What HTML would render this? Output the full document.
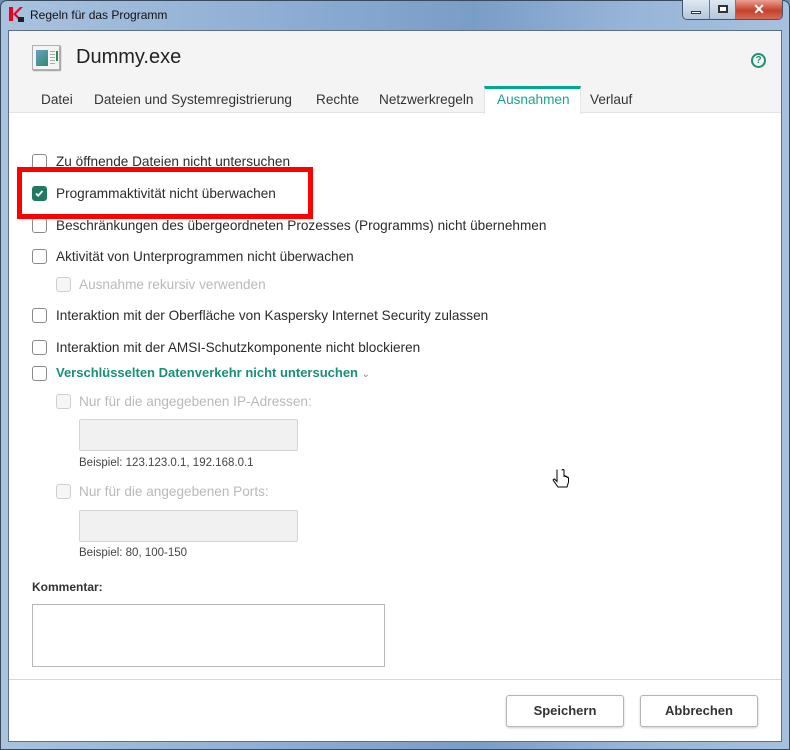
<!DOCTYPE html>
<html><head><meta charset="utf-8"><style>
*{margin:0;padding:0;box-sizing:border-box}
body{width:790px;height:750px;overflow:hidden;font-family:"Liberation Sans",sans-serif;background:#6f8fb5;position:relative}
.a{position:absolute;white-space:nowrap}
.frame{position:absolute;left:0;top:0;width:790px;height:750px;border:1px solid #3a4a5e;border-radius:7px 7px 0 0;background:linear-gradient(90deg,#a9c3df 0%,#8eaed3 35%,#7a9dc6 60%,#97b5d8 80%,#a6c1de 100%)}
.client{position:absolute;left:8px;top:30px;width:774px;height:712px;background:#fff;border:1px solid #5c6f86}
.cb{position:absolute;width:15px;height:15px;border:1.5px solid #8a8a8a;border-radius:3px;background:#fff}
.cb.d{border-color:#cfcfcf;background:#f6f6f6}
.lbl{position:absolute;font-size:13.6px;color:#2b2b2b;white-space:nowrap}
.lbl.d{color:#b9b9b9}
.tab{position:absolute;top:92px;font-size:13.6px;color:#333}
.inp{position:absolute;left:79px;width:219px;height:32px;background:#f1f1f1;border:1px solid #d4d4d4;border-radius:2px}
.ex{position:absolute;left:79px;font-size:11.5px;color:#444}
.btn{position:absolute;top:695px;width:118px;height:32px;border:1px solid #b5b5b5;border-radius:3px;background:#fff;box-shadow:0 1px 2px rgba(0,0,0,.2);font-size:13px;font-weight:bold;color:#333;text-align:center;line-height:30px}
</style></head><body>
<div class="frame"></div>
<div class="a" style="left:8px;top:5px;width:14px;height:18px"><svg width="16" height="18"><path d="M1 2h4v14H1z M5 9l7-7h3l-7 7 7 7h-3z" fill="#e8001c"/><rect x="10" y="12" width="6" height="5" fill="#222"/></svg></div>
<div class="a" style="left:30px;top:8px;font-size:12px;color:#111">Regeln für das Programm</div>
<div class="a" style="left:682px;top:0;width:101px;height:20px;border:1px solid #46566b;border-top:none;border-radius:0 0 5px 5px;overflow:hidden;display:flex">
 <div style="width:27px;background:linear-gradient(#dfe8f3,#b3c6dd);border-right:1px solid #6a7c92;position:relative"><div style="position:absolute;left:8px;top:11px;width:10px;height:3px;background:#fff;border:1px solid #333"></div></div>
 <div style="width:26px;background:linear-gradient(#dfe8f3,#b3c6dd);border-right:1px solid #6a7c92;position:relative"><div style="position:absolute;left:8px;top:5px;width:10px;height:8px;border:2px solid #333;background:#fff"></div></div>
 <div style="flex:1;background:linear-gradient(#e9a294,#c6402a 55%,#d56a55);color:#fff;font-weight:bold;font-size:14px;text-align:center;line-height:18px">✕</div>
</div>
<div class="client"></div>
<div class="a" style="left:9px;top:31px;width:772px;height:82px;background:#f4f4f4;border-bottom:1px solid #e4e4e4"></div>
<div class="a" style="left:32px;top:45px;width:28px;height:25px;border:1px solid #b0b0b0;background:#f4f4f4;box-shadow:1px 1px 1px #999">
 <div style="position:absolute;left:3px;top:4px;width:12px;height:16px;background:linear-gradient(135deg,#6aa0c9,#2f8a6a)"></div>
 <div style="position:absolute;left:17px;top:5px;width:5px;height:14px;background:repeating-linear-gradient(#aaa 0 1px,transparent 1px 3px)"></div>
 <div style="position:absolute;left:23px;top:5px;width:2px;height:10px;background:#2a8a55"></div>
</div>
<div class="a" style="left:76px;top:46px;font-size:20px;color:#222">Dummy.exe</div>
<div class="a" style="left:751px;top:53px;width:15px;height:15px;border:2px solid #1f8f70;border-radius:50%;color:#1f8f70;font-size:10px;font-weight:bold;text-align:center;line-height:11px">?</div>
<div class="a" style="left:484px;top:86px;width:97px;height:28px;background:#fff;border-top:3px solid #00a88e;border-left:1px solid #e4e4e4;border-right:1px solid #e4e4e4"></div>
<div class="tab" style="left:41px">Datei</div>
<div class="tab" style="left:94px">Dateien und Systemregistrierung</div>
<div class="tab" style="left:316px">Rechte</div>
<div class="tab" style="left:379px">Netzwerkregeln</div>
<div class="tab" style="left:497px;color:#1aa58e">Ausnahmen</div>
<div class="tab" style="left:590px">Verlauf</div>

<div class="cb" style="left:32px;top:154px"></div><div class="lbl" style="left:56px;top:154px">Zu öffnende Dateien nicht untersuchen</div>
<div class="cb" style="left:32px;top:186px;background:#1f7a63;border-color:#1f7a63"><svg width="12" height="12" style="position:absolute;left:0;top:0"><path d="M3 6.5l2.2 2.2L9.5 4" stroke="#fff" stroke-width="1.8" fill="none"/></svg></div><div class="lbl" style="left:56px;top:186px">Programmaktivität nicht überwachen</div>
<div class="cb" style="left:32px;top:218px"></div><div class="lbl" style="left:56px;top:218px">Beschränkungen des übergeordneten Prozesses (Programms) nicht übernehmen</div>
<div class="cb" style="left:32px;top:249px"></div><div class="lbl" style="left:56px;top:249px">Aktivität von Unterprogrammen nicht überwachen</div>
<div class="cb d" style="left:56px;top:277px"></div><div class="lbl d" style="left:79px;top:277px">Ausnahme rekursiv verwenden</div>
<div class="cb" style="left:32px;top:308px"></div><div class="lbl" style="left:56px;top:308px">Interaktion mit der Oberfläche von Kaspersky Internet Security zulassen</div>
<div class="cb" style="left:32px;top:340px"></div><div class="lbl" style="left:56px;top:340px">Interaktion mit der AMSI-Schutzkomponente nicht blockieren</div>
<div class="cb" style="left:32px;top:366px"></div><div class="lbl" style="left:56px;top:365px;color:#1a8f78;font-weight:bold;font-size:13px">Verschlüsselten Datenverkehr nicht untersuchen <span style="font-weight:normal;color:#888;font-size:10px">&#8964;</span></div>
<div class="cb d" style="left:56px;top:394px"></div><div class="lbl d" style="left:79px;top:394px">Nur für die angegebenen IP-Adressen:</div>
<div class="inp" style="top:419px"></div>
<div class="ex" style="top:457px">Beispiel: 123.123.0.1, 192.168.0.1</div>
<div class="cb d" style="left:56px;top:484px"></div><div class="lbl d" style="left:79px;top:484px">Nur für die angegebenen Ports:</div>
<div class="inp" style="top:510px"></div>
<div class="ex" style="top:547px">Beispiel: 80, 100-150</div>
<div class="a" style="left:32px;top:580px;font-size:12px;font-weight:bold;color:#333">Kommentar:</div>
<div class="a" style="left:32px;top:604px;width:353px;height:63px;border:1px solid #b8b8b8;background:#fff"></div>
<div class="a" style="left:9px;top:679px;width:772px;height:1px;background:#d8d8d8"></div>
<div class="btn" style="left:506px">Speichern</div>
<div class="btn" style="left:640px">Abbrechen</div>
<div class="a" style="left:17px;top:167px;width:296px;height:52px;border:5px solid #f00"></div>
<svg class="a" style="left:552px;top:468px" width="18" height="24"><path d="M5 1.5v12l-2-2c-1-1-2.5 0-1.5 1.2L6 19h9l1.5-5v-4c0-1-1.5-1-1.5 0v-1c0-1-1.5-1-1.5 0v-.5c0-1-1.5-1-1.5 0V9 2.5c0-1.3-2-1.3-2 0" fill="#fff" stroke="#000" stroke-width="1"/></svg>
</body></html>
